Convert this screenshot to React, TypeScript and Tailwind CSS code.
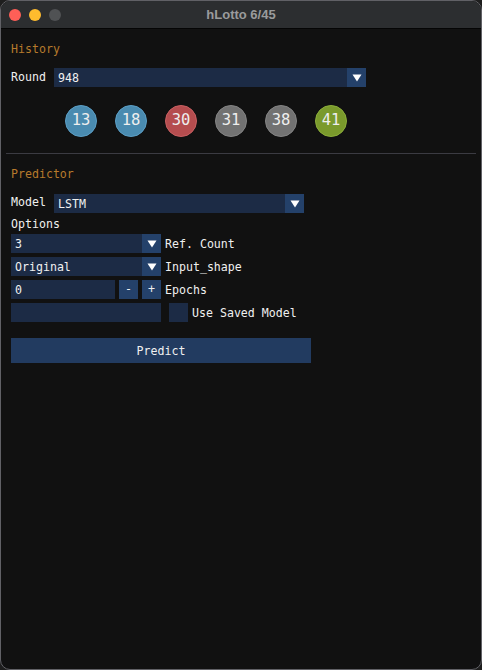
import React from "react";

const mono = { fontFamily: '"DejaVu Sans Mono", "Liberation Mono", monospace' };

function Arrow() {
  return (
    <div className="w-[19px] h-[19px] bg-[#24416a] flex items-center justify-center shrink-0">
      <svg width="10" height="8" viewBox="0 0 10 8">
        <polygon points="0.5,0.5 9.5,0.5 5,7.5" fill="#ffffff" />
      </svg>
    </div>
  );
}

function Combo({ value, width }: { value: string; width: number }) {
  return (
    <div className="flex h-[19px] bg-[#1c2b45]" style={{ width }}>
      <div className="flex-1 pl-[4px] pt-[2px] leading-[17px] text-[#f0f0f0]">{value}</div>
      <Arrow />
    </div>
  );
}

const balls = [
  { n: 13, c: "#4a8bb0", r: "#5c9fc6" },
  { n: 18, c: "#4a8bb0", r: "#5c9fc6" },
  { n: 30, c: "#b54d4f", r: "#c96062" },
  { n: 31, c: "#727272", r: "#848484" },
  { n: 38, c: "#727272", r: "#848484" },
  { n: 41, c: "#7a9a2c", r: "#8cae3a" },
];

export default function App() {
  return (
    <div className="w-[482px] h-[670px] bg-[#1e1e1e]">
      <div className="w-full h-full rounded-[10px] border border-[#616166] bg-[#111111] overflow-hidden flex flex-col">
        <div className="h-[28px] bg-[#2c2e30] border-b border-[#050505] flex items-center relative shrink-0">
          <div className="flex items-center gap-[8px] pl-[8px]">
            <div className="w-[12px] h-[12px] rounded-full bg-[#fe5f57]" />
            <div className="w-[12px] h-[12px] rounded-full bg-[#febc2e]" />
            <div className="w-[12px] h-[12px] rounded-full bg-[#505254]" />
          </div>
          <div
            className="absolute inset-0 flex items-center justify-center text-[13px] font-bold text-[#9a9b9c]"
            style={{ fontFamily: '"Liberation Sans", Arial, sans-serif' }}
          >
            hLotto 6/45
          </div>
        </div>
        <div className="flex flex-col px-[10px] text-[11.6px] text-[#f0f0f0]" style={mono}>
          <div className="mt-[14px] h-[13px] leading-[13px] text-[#b67a2c]">History</div>
          <div className="mt-[12px] flex h-[19px] items-start">
            <div className="w-[43px] pt-[1px] leading-[17px]">Round</div>
            <Combo value="948" width={312} />
          </div>
          <div className="mt-[18px] flex gap-[18px] pl-[54px]">
            {balls.map((b) => (
              <div
                key={b.n}
                className="w-[32px] h-[32px] rounded-full border-[1.5px] flex items-center justify-center text-[15.5px] text-[#eeeeee]"
                style={{ backgroundColor: b.c, borderColor: b.r }}
              >
                {b.n}
              </div>
            ))}
          </div>
          <div className="mt-[16px] -mx-[5px] h-[1px] bg-[#3b3b42]" />
          <div className="mt-[14px] h-[13px] leading-[13px] text-[#b67a2c]">Predictor</div>
          <div className="mt-[13px] flex h-[19px] items-start">
            <div className="w-[43px] pt-[1px] leading-[15px]">Model</div>
            <Combo value="LSTM" width={250} />
          </div>
          <div className="mt-[5px] h-[13px] leading-[13px]">Options</div>
          <div className="mt-[3px] flex h-[19px] items-center gap-[4px]">
            <Combo value="3" width={150} />
            <div className="pt-[2px] leading-[17px]">Ref. Count</div>
          </div>
          <div className="mt-[4px] flex h-[19px] items-center gap-[4px]">
            <Combo value="Original" width={150} />
            <div className="pt-[2px] leading-[17px]">Input_shape</div>
          </div>
          <div className="mt-[4px] flex h-[19px] items-center gap-[4px]">
            <div className="w-[104px] h-[19px] bg-[#1c2b45] pl-[4px] pt-[2px] leading-[17px]">0</div>
            <div className="w-[19px] h-[19px] bg-[#24416a] flex items-center justify-center leading-[19px]">-</div>
            <div className="w-[19px] h-[19px] bg-[#24416a] flex items-center justify-center leading-[19px]">+</div>
            <div className="pt-[2px] leading-[17px]">Epochs</div>
          </div>
          <div className="mt-[4px] flex h-[19px] items-center">
            <div className="w-[150px] h-[19px] bg-[#1c2b45]" />
            <div className="ml-[8px] w-[19px] h-[19px] bg-[#1c2b45]" />
            <div className="ml-[4px] pt-[2px] leading-[17px]">Use Saved Model</div>
          </div>
          <div className="mt-[16px] w-[300px] h-[25px] bg-[#223b60] flex items-center justify-center pt-[2px]">
            Predict
          </div>
        </div>
      </div>
    </div>
  );
}
